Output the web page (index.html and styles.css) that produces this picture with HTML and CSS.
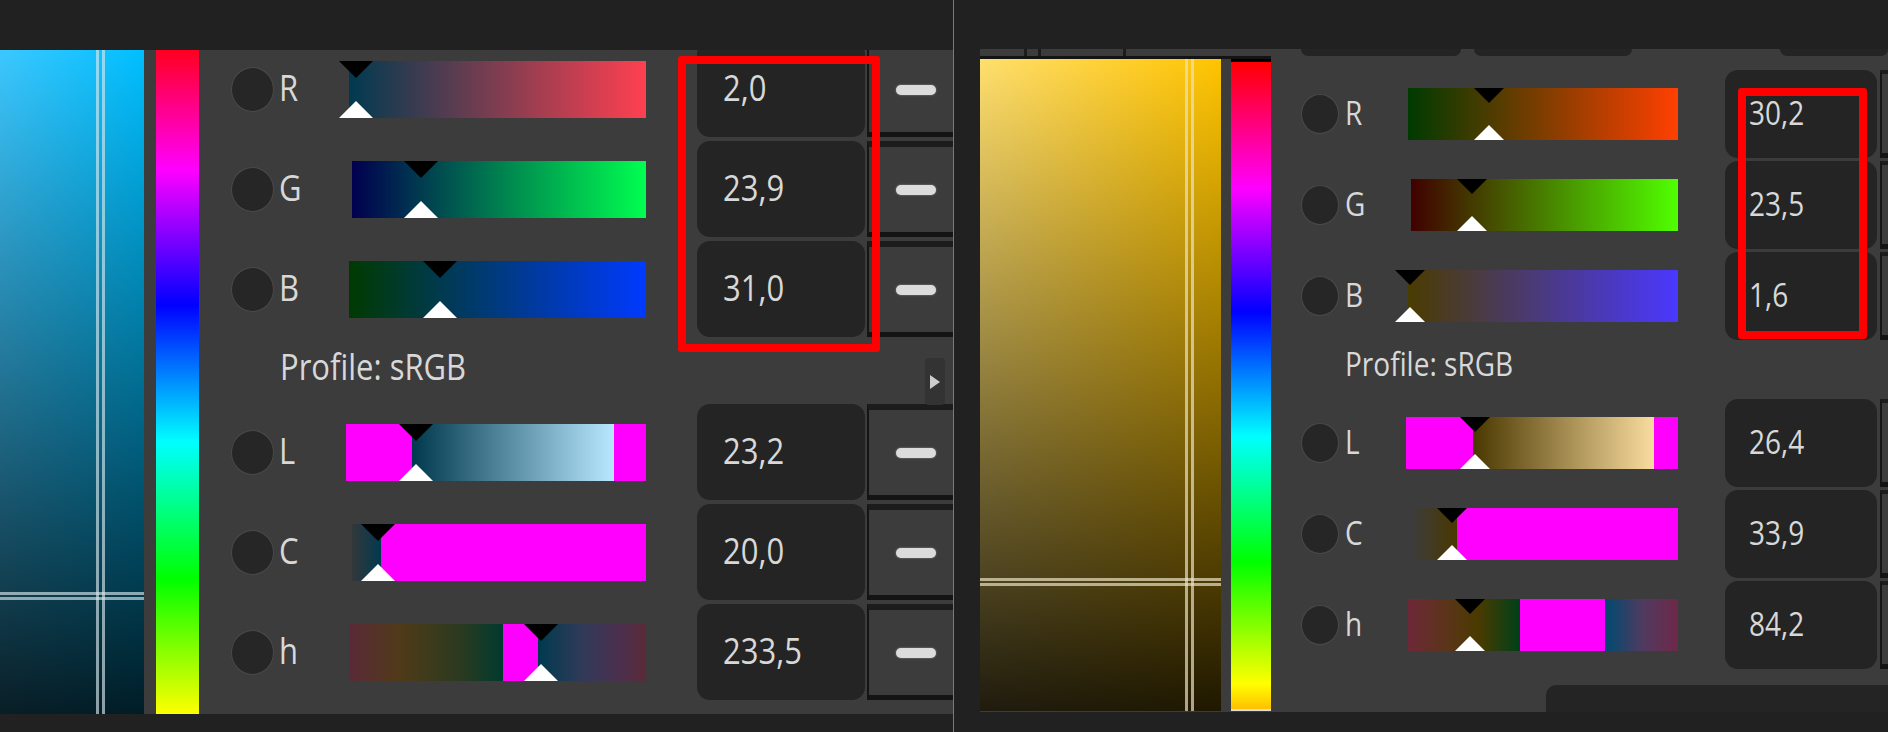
FILE: index.html
```html
<!DOCTYPE html>
<html>
<head>
    <title>Color Picker</title>
    <link rel="stylesheet" href="styles.css">
</head>
<body>
    <div class="pane pane-a">
        <div class="work">
            <div class="canvas canvas-a"><div class="cross-v"></div><div class="cross-h"></div></div>
            <div class="hue hue-a"></div>
            <div class="panel">
                <div class="row"><span class="dot"></span><span class="name"><span>R</span></span><div class="bar a-r"><i class="thumb" style="left:2.2%"></i></div><div class="val"><span>2,0</span></div><div class="btn"><i></i></div></div>
                <div class="row"><span class="dot"></span><span class="name"><span>G</span></span><div class="bar a-g"><i class="thumb" style="left:23.5%"></i></div><div class="val"><span>23,9</span></div><div class="btn"><i></i></div></div>
                <div class="row"><span class="dot"></span><span class="name"><span>B</span></span><div class="bar a-b"><i class="thumb" style="left:30.8%"></i></div><div class="val"><span>31,0</span></div><div class="btn"><i></i></div></div>
                <div class="profile"><span>Profile: sRGB</span></div>
                <div class="row"><span class="dot"></span><span class="name"><span>L</span></span><div class="bar a-l"><i class="thumb" style="left:23.2%"></i></div><div class="val"><span>23,2</span></div><div class="btn"><i></i></div></div>
                <div class="row"><span class="dot"></span><span class="name"><span>C</span></span><div class="bar a-c"><i class="thumb" style="left:8.8%"></i></div><div class="val"><span>20,0</span></div><div class="btn"><i></i></div></div>
                <div class="row"><span class="dot"></span><span class="name"><span>h</span></span><div class="bar a-h"><i class="thumb" style="left:64.5%"></i></div><div class="val"><span>233,5</span></div><div class="btn"><i></i></div></div>
                <div class="expander"><i></i></div>
                <div class="redbox"></div>
            </div>
        </div>
    </div>

    <div class="pane pane-b">
        <div class="work">
            <div class="picker">
                <div class="strip"><i class="s1"></i><i class="s2"></i><i class="s3"></i><i class="s4"></i></div>
                <div class="picker-body">
                    <div class="canvas canvas-b"><div class="cross-v"></div><div class="cross-h"></div></div>
                    <div class="hue hue-b"></div>
                </div>
            </div>
            <div class="panel">
                <div class="tabs"><i class="t1"></i><i class="t2"></i><i class="t3"></i></div>
                <div class="row"><span class="dot"></span><span class="name"><span>R</span></span><div class="bar b-r"><i class="thumb" style="left:30%"></i></div><div class="val"><span>30,2</span></div><div class="btn"></div></div>
                <div class="row"><span class="dot"></span><span class="name"><span>G</span></span><div class="bar b-g"><i class="thumb" style="left:23.2%"></i></div><div class="val"><span>23,5</span></div><div class="btn"></div></div>
                <div class="row"><span class="dot"></span><span class="name"><span>B</span></span><div class="bar b-b"><i class="thumb" style="left:1.1%"></i></div><div class="val"><span>1,6</span></div><div class="btn"></div></div>
                <div class="profile"><span>Profile: sRGB</span></div>
                <div class="row"><span class="dot"></span><span class="name"><span>L</span></span><div class="bar b-l"><i class="thumb" style="left:25.8%"></i></div><div class="val"><span>26,4</span></div><div class="btn"></div></div>
                <div class="row"><span class="dot"></span><span class="name"><span>C</span></span><div class="bar b-c"><i class="thumb" style="left:15.5%"></i></div><div class="val"><span>33,9</span></div><div class="btn"></div></div>
                <div class="row"><span class="dot"></span><span class="name"><span>h</span></span><div class="bar b-h"><i class="thumb" style="left:23.3%"></i></div><div class="val"><span>84,2</span></div><div class="btn"></div></div>
                <div class="footer-box"></div>
                <div class="redbox"></div>
            </div>
        </div>
    </div>
</body>
</html>
```

FILE: styles.css
```css
html, body {
    margin: 0;
    height: 100%;
}
body {
    width: 1888px;
    height: 732px;
    display: flex;
    overflow: hidden;
    background-color: #212121;
    font-family: "Open Sans", sans-serif;
    color: #d8d8d8;
}
.pane {
    box-sizing: border-box;
    height: 732px;
    overflow: hidden;
}
.pane-a {
    width: 954px;
    padding: 50px 0 18px;
    border-right: 1px solid #7a7a7a;
}
.pane-b {
    flex: 1;
    min-width: 0;
    padding: 49px 0 20px 26px;
}
.work {
    display: flex;
    height: 100%;
    background-color: #3c3c3c;
}

/* colour square */
.canvas {
    position: relative;
    overflow: hidden;
}
.canvas-a {
    width: 144px;
    margin-right: 12px;
    background: linear-gradient(rgba(0,0,0,0), rgba(0,0,0,.85)), linear-gradient(to right, #3cc8ff, #00bfff);
}
.canvas-b {
    width: 241px;
    margin-right: 10px;
    background: linear-gradient(rgba(0,0,0,0), rgba(0,0,0,.88)), linear-gradient(to right, #ffdf6e, #ffc400);
}
.cross-v, .cross-h {
    position: absolute;
    box-sizing: border-box;
}
.cross-v {
    top: 0;
    bottom: 0;
    border-left: 3px solid;
    border-right: 3px solid;
}
.cross-h {
    left: 0;
    right: 0;
    border-top: 3px solid;
    border-bottom: 3px solid;
}
.canvas-a .cross-v, .canvas-a .cross-h {
    border-color: rgba(215, 230, 235, .65);
}
.canvas-b .cross-v, .canvas-b .cross-h {
    border-color: rgba(235, 225, 195, .7);
}
.canvas-a .cross-v {
    left: 96px;
    width: 9px;
}
.canvas-a .cross-h {
    top: 542px;
    height: 8px;
}
.canvas-b .cross-v {
    left: 205px;
    width: 9px;
}
.canvas-b .cross-h {
    top: 519px;
    height: 8px;
}

/* hue strip */
.hue-a {
    width: 43px;
    background: linear-gradient(#f00 -17px, #f0f 120px, #00f 255px, #0ff 392px, #0f0 529px, #ff0 664px);
}
.hue-b {
    width: 40px;
    height: 652px;
    background: linear-gradient(#000 3px, #f00 3px, #f0f 129px, #00f 253px, #0ff 378px, #0f0 503px, #ff0 625px, #ffc000 650px, #ddd 650px);
}
.picker {
    width: 291px;
    flex-shrink: 0;
}
.strip {
    display: flex;
    gap: 3px;
    height: 7px;
    background-color: #1c1c1c;
}
.strip i {
    background-color: #3c3c3c;
}
.s1 { width: 44px; }
.s2 { width: 11px; }
.s3 { width: 82px; }
.s4 { flex: 1; }
.picker-body {
    display: flex;
    border-top: 3px solid #141414;
    background-color: #3c3c3c;
}

/* sliders panel */
.panel {
    position: relative;
    flex: 1;
    min-width: 0;
    display: flex;
    flex-direction: column;
    overflow: hidden;
}
.row {
    display: flex;
    align-items: center;
    flex-shrink: 0;
}
.dot {
    box-sizing: border-box;
    flex-shrink: 0;
    border-radius: 50%;
    background-color: #262626;
    border: 1px solid #4a4a4a;
}
.name {
    flex: 1;
    min-width: 0;
}
.name span, .val span {
    display: inline-block;
    transform: translateY(-2px) scaleY(1.15);
}
.profile span {
    display: inline-block;
    transform: scaleY(1.15);
}
.bar {
    position: relative;
    flex-shrink: 0;
}
.thumb {
    position: absolute;
    top: 0;
    bottom: 0;
}
.thumb::before, .thumb::after {
    content: "";
    position: absolute;
    left: calc(-1 * var(--tri-w));
    width: 0;
    height: 0;
}
.thumb::before {
    top: 0;
    border-top: var(--tri-h) solid #000;
    border-left: var(--tri-w) solid transparent;
    border-right: var(--tri-w) solid transparent;
}
.thumb::after {
    bottom: 0;
    border-bottom: var(--tri-h) solid #fff;
    border-left: var(--tri-w) solid transparent;
    border-right: var(--tri-w) solid transparent;
}
.val {
    box-sizing: border-box;
    flex-shrink: 0;
    height: 100%;
    display: flex;
    align-items: center;
    background-color: #242424;
    border-radius: 13px;
}
.btn {
    box-sizing: border-box;
    flex-shrink: 0;
    width: 86px;
    height: 100%;
    margin-left: 2px;
    display: flex;
    align-items: center;
    padding-left: 27px;
    background-color: #3c3c3c;
    border-left: 2px solid #151515;
}
.btn i {
    width: 40px;
    height: 10px;
    border-radius: 5px;
    background-color: #dcdcdc;
    box-shadow: 0 0 2px #999;
}
.profile {
    box-sizing: border-box;
    flex-shrink: 0;
    display: flex;
    align-items: center;
}
.redbox {
    position: absolute;
    box-sizing: border-box;
    border: 8px solid #f00;
    border-radius: 3px;
}

/* first window */
.pane-a .panel {
    gap: 4px;
    --tri-w: 17px;
    --tri-h: 17px;
    font-size: 31px;
}
.pane-a .row {
    height: 96px;
    padding-left: 32px;
}
.pane-a .row:first-child {
    margin-top: -9px;
}
.pane-a .dot {
    width: 43px;
    height: 45px;
}
.pane-a .name {
    margin-left: 5px;
}
.pane-a .bar {
    height: 57px;
}
.pane-a .val {
    width: 168px;
    margin-left: 51px;
    padding-left: 26px;
}
.pane-a .btn {
    border-top: 6px solid #1c1c1c;
    border-bottom: 5px solid #141414;
}
.pane-a .profile {
    height: 59px;
    padding: 0 0 10px 81px;
}
.pane-a .redbox {
    left: 479px;
    top: 6px;
    width: 202px;
    height: 296px;
}
.expander {
    position: absolute;
    left: 726px;
    top: 308px;
    width: 20px;
    height: 47px;
    display: flex;
    align-items: center;
    justify-content: center;
    background-color: #333;
    border-radius: 4px;
}
.expander i {
    width: 0;
    height: 0;
    border-left: 10px solid #ccc;
    border-top: 7px solid transparent;
    border-bottom: 7px solid transparent;
}
.a-r { width: 297px; background: linear-gradient(to right, #003a50, #ff4050); }
.a-g { width: 294px; background: linear-gradient(to right, #00004f, #00ff50); }
.a-b { width: 297px; background: linear-gradient(to right, #003a00, #003aff); }
.a-l { width: 300px; background: linear-gradient(to right, #f0f 21.9%, #00384e 21.9%, #b8e8ff 89.4%, #f0f 89.4%); }
.a-c { width: 294px; background: linear-gradient(to right, #33373a, #003a50 9.9%, #f0f 9.9%); }
.a-h { width: 297px; background: linear-gradient(to right, #5a2a38, #503a18 17%, #2a3a20 38%, #003a30 51.7%, #f0f 51.7%, #f0f 63.8%, #003a50 63.8%, #2f3a58 78%, #4a3050 90%, #5a2a38); }

/* second window */
.pane-b .panel {
    gap: 3px;
    --tri-w: 15.5px;
    --tri-h: 15px;
    font-size: 28px;
}
.tabs {
    position: relative;
    flex-shrink: 0;
    height: 7px;
    margin-bottom: 11px;
}
.tabs i {
    position: absolute;
    top: 0;
    height: 7px;
    background-color: #242424;
    border-radius: 0 0 8px 8px;
}
.t1 { left: 30px; width: 160px; }
.t2 { left: 203px; width: 158px; }
.t3 { left: 509px; right: 0; }
.pane-b .row {
    height: 88px;
    padding-left: 30px;
}
.pane-b .dot {
    width: 38px;
    height: 40px;
}
.pane-b .name {
    margin-left: 6px;
}
.pane-b .bar {
    height: 52px;
}
.pane-b .val {
    width: 152px;
    margin-left: 47px;
    padding-left: 24px;
}
.pane-b .btn {
    width: 8px;
    padding: 0;
    margin-left: 3px;
    border-top: 4px solid #1c1c1c;
    border-bottom: 5px solid #141414;
}
.pane-b .profile {
    height: 53px;
    padding: 0 0 14px 74px;
}
.pane-b .redbox {
    left: 467px;
    top: 39px;
    width: 129px;
    height: 251px;
}
.footer-box {
    flex: 1;
    margin: 13px 0 0 275px;
    background-color: #242424;
    border-radius: 10px 0 0 0;
}
.b-r { width: 270px; background: linear-gradient(to right, #003a00, #ff4000); }
.b-g { width: 267px; background: linear-gradient(to right, #400000, #50ff00); }
.b-b { width: 270px; background: linear-gradient(to right, #4a3c00, #4a38ff); }
.b-l { width: 272.5px; background: linear-gradient(to right, #f0f 24.7%, #4a3800 24.7%, #fadc9f 91.2%, #f0f 91.2%); }
.b-c { width: 267px; background: linear-gradient(to right, #3c3c3c, #4a3800 17.2%, #f0f 17.2%); }
.b-h { width: 270px; background: linear-gradient(to right, #6e2838, #5a3518 15%, #4a3a00 26%, #004018 41.3%, #f0f 41.3%, #f0f 73%, #004a70 73%, #503a60 87%, #6e2848); }
```
